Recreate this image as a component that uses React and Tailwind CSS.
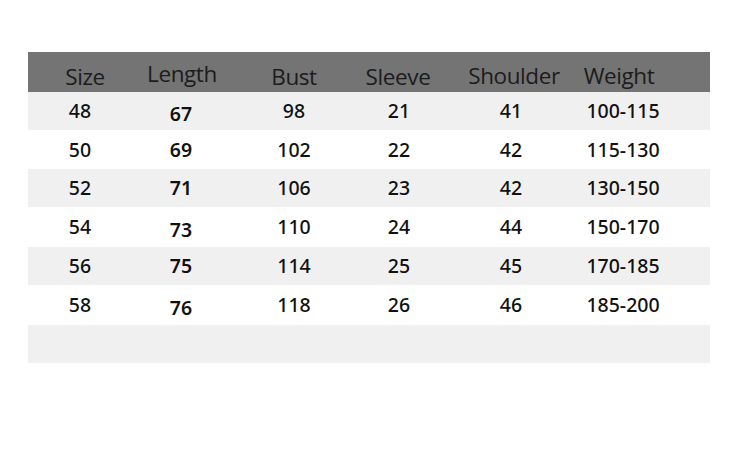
import React from 'react';

const headers = [
  { label: 'Size', shift: 'translate-x-[5px]' },
  { label: 'Length', shift: 'translate-x-[1px] -translate-y-[3px]' },
  { label: 'Bust', shift: '' },
  { label: 'Sleeve', shift: '-translate-x-[1px]' },
  { label: 'Shoulder', shift: 'translate-x-[3px] -translate-y-[1px]' },
  { label: 'Weight', shift: '-translate-x-[4px] -translate-y-[1px]' },
];

const rows = [
  { h: 'h-[38px]', bg: 'bg-[#f0f0f0]', cells: ['48', '67', '98', '21', '41', '100-115'], low: true },
  { h: 'h-[39px]', bg: 'bg-white', cells: ['50', '69', '102', '22', '42', '115-130'] },
  { h: 'h-[38px]', bg: 'bg-[#f0f0f0]', cells: ['52', '71', '106', '23', '42', '130-150'] },
  { h: 'h-[40px]', bg: 'bg-white', cells: ['54', '73', '110', '24', '44', '150-170'], low: true },
  { h: 'h-[38px]', bg: 'bg-[#f0f0f0]', cells: ['56', '75', '114', '25', '45', '170-185'] },
  { h: 'h-[40px]', bg: 'bg-white', cells: ['58', '76', '118', '26', '46', '185-200'], low: true },
];

const cols = 'grid grid-cols-[104px_98px_128px_82px_142px_82px_1fr]';

export default function App() {
  return (
    <div className="w-[750px] h-[459px] bg-white pt-[52px] px-[28px] font-['Open_Sans','Noto_Sans',sans-serif]">
      <div className="w-[682px]">
        <div className={`${cols} h-[40px] bg-[#747474] text-[#1c1c1c] text-[22.5px] tracking-[-0.4px]`}>
          {headers.map((c) => (
            <div key={c.label} className="flex items-end justify-center">
              <span className={`leading-none pb-[4px] ${c.shift}`}>{c.label}</span>
            </div>
          ))}
          <div />
        </div>
        {rows.map((r) => (
          <div key={r.cells[0]} className={`${cols} ${r.h} ${r.bg} text-[#111] text-[19.5px] font-['Noto_Sans','Open_Sans',sans-serif] font-medium`}>
            {r.cells.map((v, i) => (
              <div key={i} className="flex items-center justify-center">
                <span className={i === 1 ? (r.low ? 'translate-y-[3px] font-semibold' : 'font-semibold') : ''}>{v}</span>
              </div>
            ))}
            <div />
          </div>
        ))}
        <div className="h-[38px] bg-[#f0f0f0]" />
      </div>
    </div>
  );
}
